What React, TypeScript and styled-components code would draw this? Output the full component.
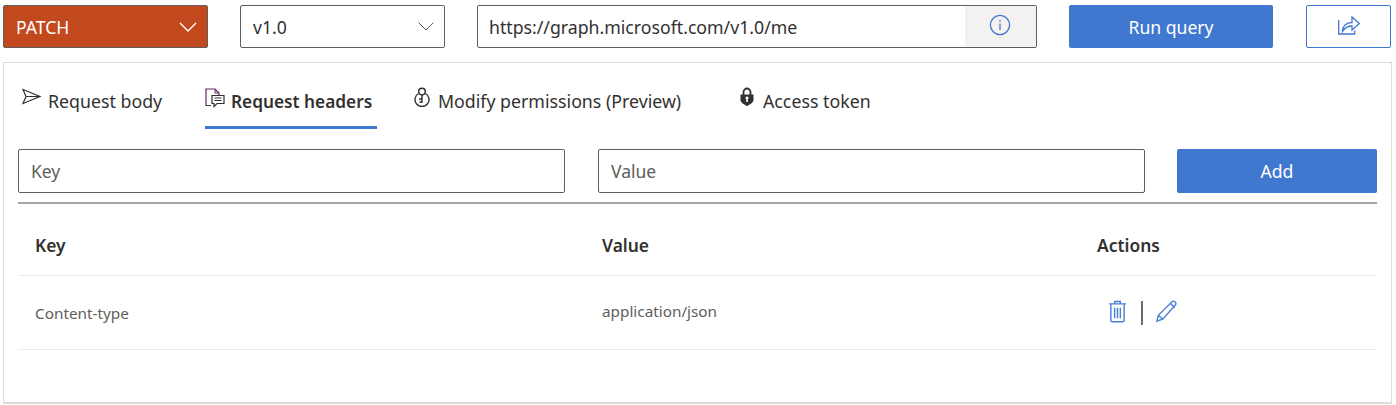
import React from "react";
import styled, { createGlobalStyle } from "styled-components";

const Global = createGlobalStyle`
  html, body { margin: 0; padding: 0; background: #fff; overflow: hidden; }
  body { font-family: "Noto Sans", "Open Sans", "Liberation Sans", sans-serif; color: #323130; }
  * { box-sizing: border-box; }
`;

const Page = styled.div`
  width: 1396px;
  height: 405px;
  padding: 5px 4px 0 3px;
  display: flex;
  flex-direction: column;
  gap: 14px;
`;

const Toolbar = styled.div`
  display: grid;
  grid-template-columns: 205px 205px 560px 204px 86px;
  column-gap: 32px;
  height: 43px;
`;

const Select = styled.div<{ $method?: boolean }>`
  display: flex;
  align-items: center;
  justify-content: space-between;
  padding: 0 10px 0 12px;
  border: 1px solid #605e5c;
  border-radius: 2px;
  background: ${(p) => (p.$method ? "#c2491d" : "#fff")};
  color: ${(p) => (p.$method ? "#fff" : "#323130")};
  font-size: 17.6px;
`;

const UrlField = styled.div`
  display: flex;
  border: 1px solid #605e5c;
  border-radius: 2px;
  overflow: hidden;
`;

const UrlText = styled.div`
  flex: 1;
  display: flex;
  align-items: center;
  padding-left: 11px;
  font-size: 17.7px;
`;

const InfoSlot = styled.div`
  width: 71px;
  display: flex;
  align-items: center;
  justify-content: center;
  padding: 0 2px 4px 0;
  background: #f3f2f1;
`;

const Primary = styled.button`
  border: 0;
  border-radius: 2px;
  background: #4078cf;
  color: #fff;
  font: inherit;
  font-size: 17.6px;
  padding: 0;
`;

const ShareButton = styled.button`
  margin-left: 1px;
  border: 1px solid #4078cf;
  border-radius: 2px;
  background: #fff;
  padding: 0 0 3px;
  display: flex;
  align-items: center;
  justify-content: center;
`;

const Panel = styled.div`
  height: 342px;
  border: 1px solid #dcdcdc;
  border-bottom-width: 2px;
  padding: 0 14px;
  display: flex;
  flex-direction: column;
`;

const Tabs = styled.div`
  display: flex;
  height: 66px;
`;

const Tab = styled.div<{ $active?: boolean; $width: number; $pad: number }>`
  width: ${(p) => p.$width}px;
  margin-left: ${(p) => p.$pad}px;
  display: flex;
  align-items: center;
  gap: 6px;
  padding-top: ${(p) => (p.$active ? "14px" : "12px")};
  border-bottom: 3px solid ${(p) => (p.$active ? "#4078cf" : "transparent")};
  font-size: ${(p) => (p.$active ? "17.25px" : "17.75px")};
  font-weight: ${(p) => (p.$active ? 600 : 400)};
  white-space: nowrap;
`;

const TabIcon = styled.svg`
  flex: none;
  width: 20px;
  height: 20px;
  margin-top: -8px;
`;

const FormRow = styled.div`
  display: grid;
  grid-template-columns: 580px 579px 200px;
  height: 44px;
  margin-top: 20px;
`;

const TextInput = styled.div`
  width: 547px;
  display: flex;
  align-items: center;
  padding-left: 12px;
  border: 1px solid #605e5c;
  border-radius: 2px;
  font-size: 17.5px;
  color: #605e5c;
`;

const Table = styled.div`
  margin-top: 9px;
  border-top: 2px solid #a6a6a6;
`;

const Row = styled.div<{ $head?: boolean; $height: number }>`
  display: grid;
  grid-template-columns: 567px 495px 1fr;
  align-items: center;
  height: ${(p) => p.$height}px;
  padding: ${(p) => (p.$head ? "10px 0 0 17px" : "0 0 4px 17px")};
  border-bottom: 1px solid #edebe9;
  font-size: ${(p) => (p.$head ? "17.4px" : "15.3px")};
  font-weight: ${(p) => (p.$head ? 600 : 400)};
  color: ${(p) => (p.$head ? "#323130" : "#605e5c")};
`;

const KeyCell = styled.span`
  padding-top: 4px;
`;

const Actions = styled.div`
  display: flex;
  align-items: center;
  padding: 2px 0 0 11px;
`;

const Sep = styled.span`
  width: 2px;
  height: 24px;
  margin: 2px 12px 0 14px;
  background: #6a6a6a;
`;

const stroke = { fill: "none", stroke: "#4078cf", strokeWidth: 1.3 };
const actionStroke = { fill: "none", stroke: "#4a80d6", strokeWidth: 1.5 };

export default function App() {
  return (
    <Page>
      <Global />
      <Toolbar>
        <Select $method>
          PATCH
          <svg width="18" height="10" viewBox="0 0 18 10"><path d="M1 1l8 8 8-8" fill="none" stroke="#fff" strokeWidth="1.3" /></svg>
        </Select>
        <Select>
          v1.0
          <svg width="16" height="9" viewBox="0 0 16 9"><path d="M.5.5l7.500 7.500L15.500.5" fill="none" stroke="#605e5c" strokeWidth="1" /></svg>
        </Select>
        <UrlField>
          <UrlText>https://graph.microsoft.com/v1.0/me</UrlText>
          <InfoSlot>
            <svg width="22" height="22" viewBox="0 0 22 22">
              <circle cx="11" cy="11" r="9.6" {...stroke} />
              <path d="M11 9.500v6.500" {...stroke} />
              <circle cx="11" cy="6.800" r="0.9" fill="#4078cf" />
            </svg>
          </InfoSlot>
        </UrlField>
        <Primary>Run query</Primary>
        <ShareButton>
          <svg width="22" height="20" viewBox="0 0 22 20">
            <path d="M.7 5v14h16v-3.500" {...stroke} />
            <path d="M4.500 16.500C4.500 11 8 7.500 14 7.500V2l7.300 6.500-7.300 6.500V11c-4 0-7 1.500-9.500 5.500z" {...stroke} />
          </svg>
        </ShareButton>
      </Toolbar>
      <Panel>
        <Tabs>
          <Tab $width={145} $pad={4}>
            <TabIcon viewBox="0 0 20 20">
              <path d="M1 2.500l17 7L1 16.500l3-7zM4 9.500h14" fill="none" stroke="#323130" strokeWidth="1.2" />
            </TabIcon>
            Request body
          </Tab>
          <Tab $active $width={172} $pad={38}>
            <TabIcon viewBox="0 0 20 20">
              <path d="M6 17.500H1V1h9l4 4v2" fill="none" stroke="#5b2a5e" strokeWidth="1.2" />
              <path d="M10 1v4h4" fill="none" stroke="#5b2a5e" strokeWidth="1" />
              <path d="M7 7.500h12v8h-7l-3 3v-3H7z" fill="none" stroke="#323130" strokeWidth="1.2" />
              <path d="M9.500 10h7M9.500 12.500h7" stroke="#323130" strokeWidth="1.2" />
            </TabIcon>
            Request headers
          </Tab>
          <Tab $width={289} $pad={35}>
            <TabIcon viewBox="0 0 20 20">
              <circle cx="10" cy="4.500" r="3.300" fill="none" stroke="#323130" strokeWidth="1.5" />
              <path d="M6.500 6.500a7 7 0 1 0 7 0M10 8v8M10 12H7M10 15H7.500" fill="none" stroke="#323130" strokeWidth="1.4" />
            </TabIcon>
            Modify permissions (Preview)
          </Tab>
          <Tab $width={150} $pad={36}>
            <TabIcon viewBox="0 0 20 20">
              <path d="M6.500 8V5a3.500 3.500 0 0 1 7 0v3" fill="none" stroke="#323130" strokeWidth="1.8" />
              <path fillRule="evenodd" fill="#323130" d="M3.500 7.500h13v5.500c0 2.500-3.500 4.500-6.500 6-3-1.500-6.500-3.500-6.500-6zM10 9.500a1.500 1.500 0 0 0-.8 2.800V15h1.600v-2.700A1.500 1.500 0 0 0 10 9.500z" />
            </TabIcon>
            Access token
          </Tab>
        </Tabs>
        <FormRow>
          <TextInput>Key</TextInput>
          <TextInput>Value</TextInput>
          <Primary>Add</Primary>
        </FormRow>
        <Table>
          <Row $head $height={72}>
            <span>Key</span>
            <span>Value</span>
            <span>Actions</span>
          </Row>
          <Row $height={74}>
            <KeyCell>Content-type</KeyCell>
            <span>application/json</span>
            <Actions>
              <svg width="19" height="23" viewBox="0 0 20 24">
                <path d="M1 4h18M7 4V1.500h6V4M3 4v17.500c0 .8.500 1.300 1.300 1.300h11.400c.8 0 1.300-.5 1.300-1.300V4M7 8v11M10 8v11M13 8v11" {...actionStroke} />
              </svg>
              <Sep />
              <svg width="23" height="23" viewBox="0 0 24 24">
                <path d="M2 22l1.500-6L17.500 2c1-1 2.500-1 3.500 0s1.200 2.500 0 3.500L8 20zM3.500 16L8 20M16 3.500l4.500 4.500" {...actionStroke} />
              </svg>
            </Actions>
          </Row>
        </Table>
      </Panel>
    </Page>
  );
}
